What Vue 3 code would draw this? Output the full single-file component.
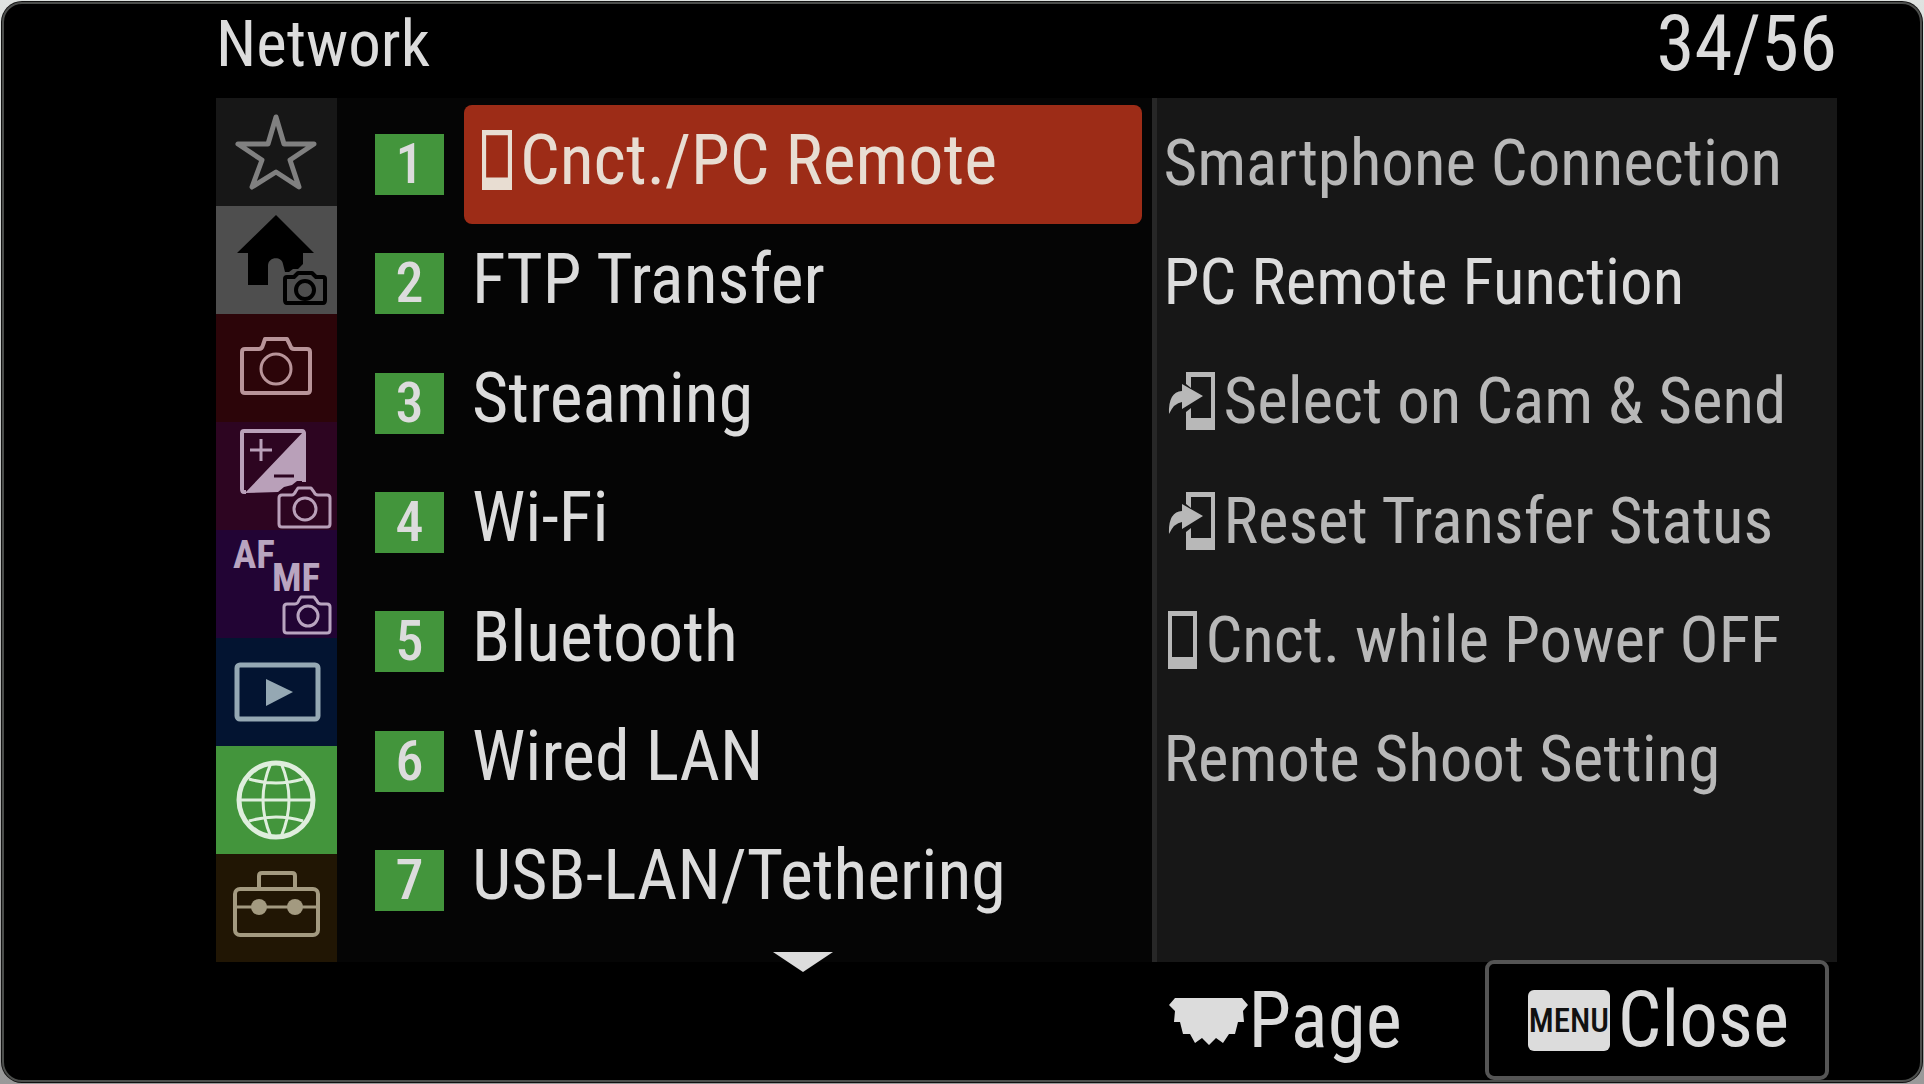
<script setup>
import { ref } from 'vue'

const tabs = [
    { id: 'my-menu', label: 'My Menu' },
    { id: 'main', label: 'Main' },
    { id: 'shooting', label: 'Shooting' },
    { id: 'exposure', label: 'Exposure/Color' },
    { id: 'focus', label: 'Focus' },
    { id: 'playback', label: 'Playback' },
    { id: 'network', label: 'Network' },
    { id: 'setup', label: 'Setup' }
]

const groups = [
    { text: 'Cnct./PC Remote', icon: 'phone' },
    { text: 'FTP Transfer' },
    { text: 'Streaming' },
    { text: 'Wi-Fi' },
    { text: 'Bluetooth' },
    { text: 'Wired LAN' },
    { text: 'USB-LAN/Tethering' }
]

const items = [
    { text: 'Smartphone Connection' },
    { text: 'PC Remote Function', enabled: true },
    { text: 'Select on Cam & Send', icon: 'send' },
    { text: 'Reset Transfer Status', icon: 'send' },
    { text: 'Cnct. while Power OFF', icon: 'phone' },
    { text: 'Remote Shoot Setting' }
]

const activeTab = ref('network')
const activeGroup = ref(0)
</script>

<template>
    <div class="screen">
        <header class="top">
            <h1>Network</h1>
            <span class="counter">34/56</span>
        </header>

        <main class="panel">
            <nav class="tabs">
                <button
                    v-for="tab in tabs"
                    :key="tab.id"
                    type="button"
                    class="tab"
                    :class="tab.id"
                    :aria-label="tab.label"
                    :aria-pressed="tab.id === activeTab"
                    @click="activeTab = tab.id"
                >
                    <svg viewBox="0 0 121 108" fill="none" stroke="currentColor" stroke-width="4" stroke-linejoin="round">
                        <path
                            v-if="tab.id === 'my-menu'"
                            d="M60 19 68 46H98L74 62 83 89 60 74 36 89 46 62 22 46H52Z"
                            stroke-width="5"
                        />
                        <template v-else-if="tab.id === 'main'">
                            <path
                                d="M60 9 98 47H87V58L82 63 77 63 73 66H69L67 58C66 50 52 50 52 60V79H32V47H21Z"
                                fill="currentColor"
                                stroke="none"
                            />
                            <path d="M71 71H78L82 67H96L100 71H107Q109 71 109 73V94Q109 97 107 97H71Q69 97 69 94V73Q69 71 71 71Z" />
                            <circle cx="89" cy="84" r="9" />
                        </template>
                        <template v-else-if="tab.id === 'shooting'">
                            <path d="M29 35H43Q46 35 47 31L49 25H71L74 31Q75 35 78 35H91Q94 35 94 38V76Q94 79 91 79H29Q26 79 26 76V38Q26 35 29 35Z" />
                            <circle cx="60" cy="55" r="15" stroke-width="3" />
                        </template>
                        <template v-else-if="tab.id === 'exposure'">
                            <path d="M62 70 68 65 76 63 81 59 90 59V11L88 9 29 71Z" fill="currentColor" stroke="none" />
                            <path d="M30 70H28Q26 70 26 67V11Q26 9 28 9H86Q88 9 88 12V60" />
                            <path d="M34 28H56M45 17V39" stroke-width="3" />
                            <path class="minus" d="M58 54H78" stroke-width="3" />
                            <path d="M66 73H76Q78 73 80 69L82 66H95L98 70Q99 73 102 73H111Q114 73 114 76V102Q114 105 111 105H66Q63 105 63 102V76Q63 73 66 73Z" stroke-width="3" />
                            <circle cx="89" cy="87" r="11" stroke-width="3" />
                        </template>
                        <template v-else-if="tab.id === 'focus'">
                            <text x="17" y="38">AF</text>
                            <text x="56" y="61">MF</text>
                            <path d="M71 74H79Q82 74 83 70L85 67H98L101 71Q102 74 105 74H111Q114 74 114 77V100Q114 103 111 103H71Q68 103 68 100V77Q68 74 71 74Z" stroke-width="3" />
                            <circle cx="92" cy="86" r="10" stroke-width="3" />
                        </template>
                        <template v-else-if="tab.id === 'playback'">
                            <rect x="21" y="27" width="81" height="54" rx="3" stroke-width="5" />
                            <path d="M50 41 77 54 50 68Z" fill="currentColor" stroke="none" />
                        </template>
                        <template v-else-if="tab.id === 'network'">
                            <circle cx="60" cy="54" r="37" stroke-width="5" />
                            <path
                                d="M23 54H97M33 33Q60 41 87 33M33 75Q60 67 87 75M55 17Q39 54 55 91M65 17Q81 54 65 91"
                                stroke-width="3"
                            />
                        </template>
                        <template v-else>
                            <rect x="19" y="35" width="83" height="46" rx="5" />
                            <path d="M43 35V22Q43 19 46 19H76Q79 19 79 22V35" />
                            <path d="M19 53H102" stroke-width="3" />
                            <circle cx="43" cy="53" r="8" fill="currentColor" stroke="none" />
                            <circle cx="79" cy="53" r="8" fill="currentColor" stroke="none" />
                        </template>
                    </svg>
                </button>
            </nav>

            <section class="groups">
                <button
                    v-for="(group, index) in groups"
                    :key="group.text"
                    type="button"
                    class="group"
                    :class="{ selected: index === activeGroup }"
                    @click="activeGroup = index"
                >
                    <span class="badge">{{ index + 1 }}</span>
                    <span class="name">
                        <svg v-if="group.icon" class="phone" viewBox="0 0 29 58">
                            <path d="M0 0H29V58H0ZM4 5V46H25V5Z" fill="currentColor" fill-rule="evenodd" />
                        </svg>
                        {{ group.text }}
                    </span>
                </button>
                <svg class="more" viewBox="0 0 60 20">
                    <path d="M0 0H60L30 20Z" fill="currentColor" />
                </svg>
            </section>

            <section class="items">
                <button
                    v-for="item in items"
                    :key="item.text"
                    type="button"
                    class="item"
                    :class="{ enabled: item.enabled }"
                >
                    <svg v-if="item.icon === 'phone'" class="phone" viewBox="0 0 29 58">
                        <path d="M0 0H29V58H0ZM4 5V46H25V5Z" fill="currentColor" fill-rule="evenodd" />
                    </svg>
                    <svg v-if="item.icon === 'send'" class="send" viewBox="0 0 47 58">
                        <path d="M18 12V0H47V58H18V40L23 36V46H43V5H23V16Z" fill="currentColor" />
                        <path d="M14 12 35 24 14 37V30Q6 31 1 42Q0 20 14 19Z" fill="currentColor" />
                    </svg>
                    {{ item.text }}
                </button>
            </section>
        </main>

        <footer class="bottom">
            <button type="button" class="page">
                <svg viewBox="0 0 79 47">
                    <path
                        d="M6 0H73L79 7 74 13 75 24H69L66 36H60L54 45 47 40 40 47 33 40 26 45 21 36H14L11 24H5L6 13 0 7Z"
                        fill="currentColor"
                    />
                </svg>
                Page
            </button>
            <button type="button" class="close">
                <span class="key">MENU</span>
                Close
            </button>
        </footer>
    </div>
</template>

<style>
body {
    margin: 0;
    background: linear-gradient(#dfe3e1, #999);
}
</style>

<style scoped>
.screen {
    box-sizing: border-box;
    display: flex;
    flex-direction: column;
    min-height: calc(100vh - 4px);
    margin: 2px;
    padding: 0 83px 0 212px;
    border: 2px solid #4c4e4c;
    border-radius: 20px;
    box-shadow: 0 0 0 1px #111;
    background: #000;
    color: #dcdcdc;
    font-family: "Roboto Condensed", Roboto, sans-serif;
}

button {
    margin: 0;
    padding: 0;
    border: 0;
    background: none;
    color: inherit;
    font: inherit;
    text-align: left;
    cursor: pointer;
}

svg {
    display: block;
    flex: none;
}

.top {
    display: flex;
    justify-content: space-between;
    align-items: center;
    height: 94px;
    padding-bottom: 14px;
    box-sizing: border-box;
    line-height: 80px;
}

h1 {
    margin: 0;
    font-size: 65px;
    font-weight: 400;
}

.counter {
    font-size: 77px;
}

.panel {
    display: grid;
    grid-template-columns: 121px minmax(0, 816fr) minmax(0, 685fr);
    height: 864px;
}

.tab {
    display: block;
    width: 100%;
    height: 108px;
}

.tab svg {
    width: 121px;
    height: 108px;
}

.tab text {
    fill: currentColor;
    stroke: none;
    font-size: 39px;
    font-weight: 700;
}

.my-menu {
    background: #171717;
    color: #808080;
}

.main {
    background: #4e4e4e;
    color: #000;
}

.shooting {
    background: #2c0509;
    color: #b89499;
}

.exposure {
    background: #2d0521;
    color: #b9a0b9;
}

.exposure .minus {
    stroke: #2d0521;
}

.focus {
    background: #220434;
    color: #b9a5c0;
}

.playback {
    background: #031431;
    color: #95a8b3;
}

.network {
    background: #43953c;
    color: #dfeedd;
}

.setup {
    background: #211604;
    color: #a39a80;
}

.groups {
    position: relative;
    display: flex;
    flex-direction: column;
    padding: 7px 10px 22px 38px;
    background: #050505;
}

.group {
    display: flex;
    flex: 1;
    align-items: center;
    gap: 20px;
    white-space: nowrap;
}

.badge {
    flex: none;
    width: 69px;
    height: 61px;
    background: #43953c;
    font-size: 56px;
    font-weight: 500;
    line-height: 61px;
    text-align: center;
}

.name {
    display: flex;
    flex: 1;
    align-items: center;
    align-self: stretch;
    gap: 8px;
    padding: 0 0 10px 8px;
    border-radius: 8px;
    font-size: 70px;
}

.selected .name {
    padding-left: 18px;
    background: #9d2c17;
    color: #e8ddd2;
}

.name .phone {
    width: 30px;
    height: 62px;
}

.more {
    position: absolute;
    left: 436px;
    bottom: -10px;
    width: 60px;
    height: 20px;
}

.items {
    display: flex;
    flex-direction: column;
    padding: 7px 0 141px 6px;
    border-left: 5px solid #272727;
    background: #171717;
    color: #b8b8b8;
}

.item {
    display: flex;
    flex: 1;
    align-items: center;
    gap: 8px;
    padding-bottom: 4px;
    font-size: 65px;
    white-space: nowrap;
}

.item svg {
    height: 58px;
    margin-left: 5px;
}

.item .phone {
    width: 29px;
}

.item .send {
    width: 47px;
}

.enabled {
    color: #dcdcdc;
}

.bottom {
    display: flex;
    flex: 1;
    justify-content: flex-end;
    gap: 83px;
    padding-right: 8px;
    font-size: 77px;
}

.page,
.close {
    display: flex;
    align-items: center;
}

.page {
    gap: 1px;
}

.page svg {
    width: 79px;
    height: 47px;
}

.close {
    box-sizing: border-box;
    gap: 8px;
    height: 120px;
    margin-top: -2px;
    padding: 0 36px 0 39px;
    border: 4px solid #555;
    border-radius: 9px;
}

.key {
    width: 82px;
    height: 61px;
    border-radius: 6px;
    background: #dcdcdc;
    color: #111;
    font-size: 33px;
    font-weight: 500;
    line-height: 61px;
    text-align: center;
}
</style>
